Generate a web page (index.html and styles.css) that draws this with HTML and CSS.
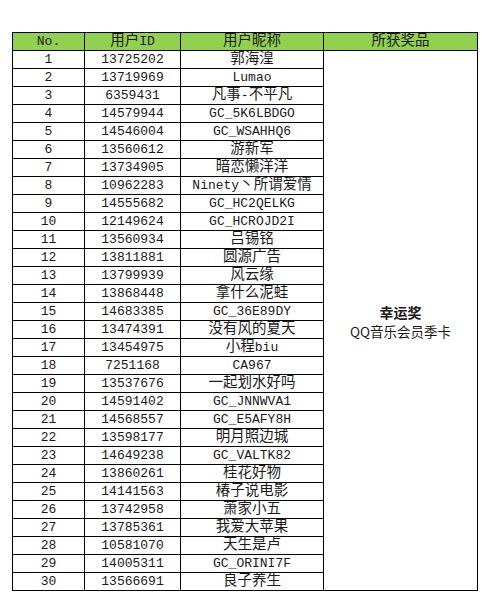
FILE: index.html
```html
<!DOCTYPE html>
<html>
<head>
<meta charset="utf-8">
<link rel="stylesheet" href="styles.css">
</head>
<body>
<table class="sheet">
  <colgroup>
    <col class="c-no"><col class="c-id"><col class="c-nick"><col class="c-prize">
  </colgroup>
  <thead>
    <tr class="head">
      <th><span class="a">No.</span></th>
      <th>用户<span class="a">ID</span></th>
      <th>用户昵称</th>
      <th>所获奖品</th>
    </tr>
  </thead>
  <tbody>
    <tr><td class="n">1</td><td class="n">13725202</td><td>郭海湟</td>
      <td class="prize" rowspan="30"><div class="p-title">幸运奖</div><div class="p-name">QQ音乐会员季卡</div></td></tr>
    <tr><td class="n">2</td><td class="n">13719969</td><td><span class="a">Lumao</span></td></tr>
    <tr><td class="n">3</td><td class="n">6359431</td><td>凡事<span class="a">-</span>不平凡</td></tr>
    <tr><td class="n">4</td><td class="n">14579944</td><td><span class="a">GC_5K6LBDGO</span></td></tr>
    <tr><td class="n">5</td><td class="n">14546004</td><td><span class="a">GC_WSAHHQ6</span></td></tr>
    <tr><td class="n">6</td><td class="n">13560612</td><td>游新军</td></tr>
    <tr><td class="n">7</td><td class="n">13734905</td><td>暗恋懒洋洋</td></tr>
    <tr><td class="n">8</td><td class="n">10962283</td><td><span class="a">Ninety</span>丶所谓爱情</td></tr>
    <tr><td class="n">9</td><td class="n">14555682</td><td><span class="a">GC_HC2QELKG</span></td></tr>
    <tr><td class="n">10</td><td class="n">12149624</td><td><span class="a">GC_HCROJD2I</span></td></tr>
    <tr><td class="n">11</td><td class="n">13560934</td><td>吕锡铭</td></tr>
    <tr><td class="n">12</td><td class="n">13811881</td><td>圆源广告</td></tr>
    <tr><td class="n">13</td><td class="n">13799939</td><td>风云缘</td></tr>
    <tr><td class="n">14</td><td class="n">13868448</td><td>拿什么泥蛙</td></tr>
    <tr><td class="n">15</td><td class="n">14683385</td><td><span class="a">GC_36E89DY</span></td></tr>
    <tr><td class="n">16</td><td class="n">13474391</td><td>没有风的夏天</td></tr>
    <tr><td class="n">17</td><td class="n">13454975</td><td>小程<span class="a">biu</span></td></tr>
    <tr><td class="n">18</td><td class="n">7251168</td><td><span class="a">CA967</span></td></tr>
    <tr><td class="n">19</td><td class="n">13537676</td><td>一起划水好吗</td></tr>
    <tr><td class="n">20</td><td class="n">14591402</td><td><span class="a">GC_JNNWVA1</span></td></tr>
    <tr><td class="n">21</td><td class="n">14568557</td><td><span class="a">GC_E5AFY8H</span></td></tr>
    <tr><td class="n">22</td><td class="n">13598177</td><td>明月照边城</td></tr>
    <tr><td class="n">23</td><td class="n">14649238</td><td><span class="a">GC_VALTK82</span></td></tr>
    <tr><td class="n">24</td><td class="n">13860261</td><td>桂花好物</td></tr>
    <tr><td class="n">25</td><td class="n">14141563</td><td>椿子说电影</td></tr>
    <tr><td class="n">26</td><td class="n">13742958</td><td>萧家小五</td></tr>
    <tr><td class="n">27</td><td class="n">13785361</td><td>我爱大苹果</td></tr>
    <tr><td class="n">28</td><td class="n">10581070</td><td>天生是卢</td></tr>
    <tr><td class="n">29</td><td class="n">14005311</td><td><span class="a">GC_ORINI7F</span></td></tr>
    <tr><td class="n">30</td><td class="n">13566691</td><td>良子养生</td></tr>
  </tbody>
</table>
</body>
</html>
```
FILE: styles.css
```css
html, body {
  margin: 0;
  padding: 0;
  background: #ffffff;
}
body {
  padding: 32px 0 0 12px;
  font-family: "Liberation Mono", "Noto Sans CJK SC", monospace;
  color: #1a1a1a;
}
.sheet {
  border-collapse: collapse;
  table-layout: fixed;
  width: 465px;
  font-size: 14.5px;
}
.c-no { width: 72px; }
.c-id { width: 96px; }
.c-nick { width: 143px; }
.c-prize { width: 154px; }
.sheet th, .sheet td {
  border: 1px solid #000;
  height: 17px;
  padding: 0;
  line-height: 17px;
  text-align: center;
  white-space: nowrap;
  overflow: hidden;
  font-weight: normal;
}
.head th {
  background: #92d050;
}
.a {
  font-family: "Liberation Mono", monospace;
  font-size: 13px;
}
.sheet td.n {
  font-family: "Liberation Mono", monospace;
  font-size: 13px;
}
.sheet td.prize {
  vertical-align: middle;
  font-family: "Noto Sans CJK SC", sans-serif;
  font-size: 13px;
  line-height: 19px;
  padding-top: 2px;
}
.p-title {
  font-weight: bold;
  font-size: 14px;
}
.p-name {
  font-size: 13.5px;
}
```
